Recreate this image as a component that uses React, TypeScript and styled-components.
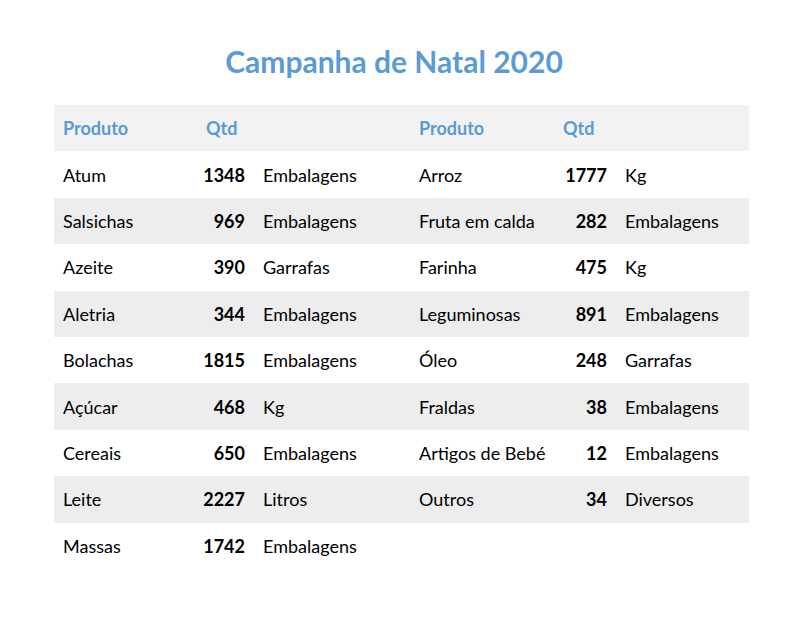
import React from "react";
import styled, { createGlobalStyle } from "styled-components";

const Global = createGlobalStyle`
  html, body { margin: 0; padding: 0; background: #ffffff; }
  body { font-family: Lato, "Open Sans", sans-serif; color: #000; }
`;

const Page = styled.div`
  width: 806px;
  height: 623px;
  box-sizing: border-box;
  padding: 40px 57px 0 54px;
`;

const Title = styled.h1`
  margin: 0;
  height: 65px;
  text-align: center;
  font-size: 30px;
  font-weight: 700;
  color: #5b9bd5;
  line-height: 42px;
  padding-right: 15px;
`;

const Table = styled.div`
  display: grid;
  grid-template-columns: 143px 57px 156px 144px 62px 133px;
  width: 695px;
`;

const Row = styled.div<{ $bg: string }>`
  display: contents;
  & > div { background: ${(p) => p.$bg}; }
`;

const Cell = styled.div<{ $align?: "left" | "right"; $bold?: boolean; $head?: boolean }>`
  height: 46.4px;
  display: flex;
  align-items: center;
  justify-content: ${(p) => (p.$align === "right" ? "flex-end" : "flex-start")};
  padding: 0 9px;
  font-size: 18px;
  font-weight: ${(p) => (p.$bold || p.$head ? 700 : 400)};
  color: ${(p) => (p.$head ? "#5b9bd5" : "#000")};
  white-space: nowrap;
`;

type Item = [string, number, string] | null;

const left: Item[] = [
  ["Atum", 1348, "Embalagens"],
  ["Salsichas", 969, "Embalagens"],
  ["Azeite", 390, "Garrafas"],
  ["Aletria", 344, "Embalagens"],
  ["Bolachas", 1815, "Embalagens"],
  ["Açúcar", 468, "Kg"],
  ["Cereais", 650, "Embalagens"],
  ["Leite", 2227, "Litros"],
  ["Massas", 1742, "Embalagens"],
];
const right: Item[] = [
  ["Arroz", 1777, "Kg"],
  ["Fruta em calda", 282, "Embalagens"],
  ["Farinha", 475, "Kg"],
  ["Leguminosas", 891, "Embalagens"],
  ["Óleo", 248, "Garrafas"],
  ["Fraldas", 38, "Embalagens"],
  ["Artigos de Bebé", 12, "Embalagens"],
  ["Outros", 34, "Diversos"],
  null,
];

const Group = ({ item }: { item: Item }) =>
  item ? (
    <>
      <Cell>{item[0]}</Cell>
      <Cell $align="right" $bold>{item[1]}</Cell>
      <Cell>{item[2]}</Cell>
    </>
  ) : (
    <>
      <Cell />
      <Cell />
      <Cell />
    </>
  );

export default function App() {
  return (
    <>
      <Global />
      <Page>
        <Title>Campanha de Natal 2020</Title>
        <Table>
          <Row $bg="#f2f2f2">
            <Cell $head>Produto</Cell>
            <Cell $head>Qtd</Cell>
            <Cell />
            <Cell $head>Produto</Cell>
            <Cell $head>Qtd</Cell>
            <Cell />
          </Row>
          {left.map((l, i) => (
            <Row key={i} $bg={i % 2 === 1 ? "#ededed" : "#ffffff"}>
              <Group item={l} />
              <Group item={right[i]} />
            </Row>
          ))}
        </Table>
      </Page>
    </>
  );
}
